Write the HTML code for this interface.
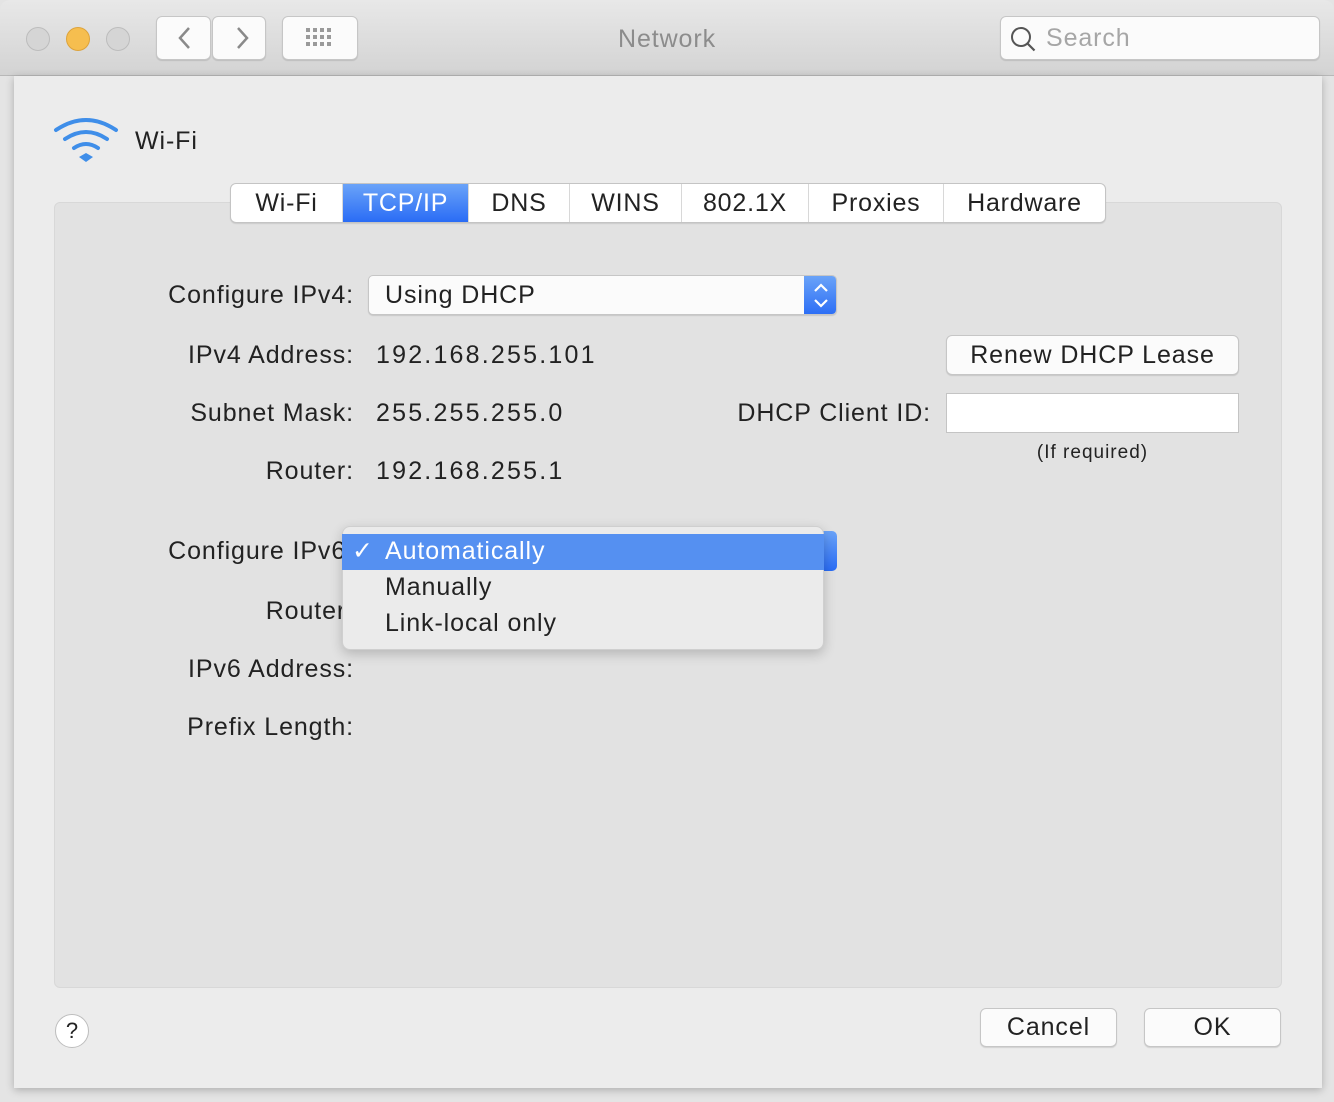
<!DOCTYPE html>
<html><head><meta charset="utf-8"><style>
*{box-sizing:border-box;margin:0;padding:0}
body{width:1334px;height:1102px;background:#e4e4e4;font-family:"Liberation Sans",sans-serif;color:#222;position:relative;overflow:hidden}
.a{position:absolute}
.title{left:0;top:0;width:1334px;height:76px;background:linear-gradient(#e8e8e8,#d3d3d3);border-bottom:1px solid #b8b8b8;border-radius:10px 10px 0 0}
.dot{width:24px;height:24px;border-radius:50%;top:27px;background:#d5d5d5;border:1px solid #bcbcbc}
.btn{background:#fbfbfb;border:1px solid #c6c6c6;border-radius:6px;box-shadow:0 1px 1px rgba(0,0,0,.12)}
.sheet{left:14px;top:76px;width:1308px;height:1012px;background:#ececec;box-shadow:0 2px 8px rgba(0,0,0,.25)}
.panel{left:54px;top:202px;width:1228px;height:786px;background:#e2e2e2;border:1px solid #d8d8d8;border-radius:6px}
.t{font-size:25px;white-space:nowrap;line-height:28px;letter-spacing:0.9px}
.n{letter-spacing:2.2px}
.r{text-align:right}
.tabs{left:230px;top:183px;height:40px;display:flex;background:#fff;border:1px solid #c4c4c4;border-radius:6px;overflow:hidden;box-shadow:0 1px 1px rgba(0,0,0,.1)}
.tabs div{height:38px;line-height:38px;font-size:25px;letter-spacing:0.8px;text-align:center;border-right:1px solid #d8d8d8}
.tabs div:last-child{border-right:none}
.tabs .on{background:linear-gradient(#6aa3f8,#2a6cf5);color:#fff}
</style></head><body>
<div class="a title"></div>
<div class="a dot" style="left:26px"></div>
<div class="a dot" style="left:66px;background:#f6be4f;border-color:#dda33b"></div>
<div class="a dot" style="left:106px"></div>
<div class="a btn" style="left:156px;top:16px;width:55px;height:44px"></div>
<div class="a btn" style="left:212px;top:16px;width:54px;height:44px"></div>
<svg class="a" style="left:156px;top:16px" width="110" height="44"><path d="M33 12l-9 10 9 10M82 12l9 10-9 10" fill="none" stroke="#8a8a8a" stroke-width="2.5"/></svg>
<div class="a btn" style="left:282px;top:16px;width:76px;height:44px"></div>
<svg class="a" style="left:282px;top:16px" width="76" height="44"><g fill="#9a9a9a"><rect x="24" y="12" width="4" height="4"/><rect x="31" y="12" width="4" height="4"/><rect x="38" y="12" width="4" height="4"/><rect x="45" y="12" width="4" height="4"/><rect x="24" y="19" width="4" height="4"/><rect x="31" y="19" width="4" height="4"/><rect x="38" y="19" width="4" height="4"/><rect x="45" y="19" width="4" height="4"/><rect x="24" y="26" width="4" height="4"/><rect x="31" y="26" width="4" height="4"/><rect x="38" y="26" width="4" height="4"/><rect x="45" y="26" width="4" height="4"/></g></svg>
<div class="a t" style="left:0;width:1334px;top:25px;text-align:center;color:#8c8c8c">Network</div>
<div class="a btn" style="left:1000px;top:16px;width:320px;height:44px"></div>
<svg class="a" style="left:1008px;top:24px" width="32" height="30"><circle cx="13" cy="13" r="9" fill="none" stroke="#555" stroke-width="2"/><path d="M19.5 19.5l7 7" stroke="#555" stroke-width="2.2"/></svg>
<div class="a t" style="left:1046px;top:24px;color:#a6a6a6">Search</div>
<div class="a sheet"></div>
<svg class="a" style="left:52px;top:114px" width="68" height="54"><g fill="none" stroke="#3f8ee9" stroke-width="4" stroke-linecap="round"><path d="M4 16Q34 -4 64 16"/><path d="M13 25Q34 11 55 25"/><path d="M22 34Q34 26 46 34"/></g><path d="M27 43l7-4 7 4-7 5z" fill="#3f8ee9"/></svg>
<div class="a t" style="left:135px;top:127px">Wi-Fi</div>
<div class="a panel"></div>
<div class="a tabs">
<div style="width:112px">Wi-Fi</div><div class="on" style="width:126px">TCP/IP</div><div style="width:101px">DNS</div><div style="width:112px">WINS</div><div style="width:127px">802.1X</div><div style="width:135px">Proxies</div><div style="width:161px">Hardware</div></div>
<div class="a t r" style="left:60px;width:294px;top:281px">Configure IPv4:</div>
<div class="a btn" style="left:368px;top:275px;width:469px;height:40px;border-radius:5px;overflow:hidden"><div class="a" style="right:0;top:0;width:32px;height:40px;background:linear-gradient(#6aa3f8,#2a6cf5)"></div></div>
<svg class="a" style="left:805px;top:275px" width="32" height="40"><path d="M10 16l6-6 6 6M10 25l6 6 6-6" fill="none" stroke="#fff" stroke-width="2.2"/></svg>
<div class="a t" style="left:385px;top:281px">Using DHCP</div>
<div class="a t r" style="left:60px;width:294px;top:341px">IPv4 Address:</div>
<div class="a t n" style="left:376px;top:341px">192.168.255.101</div>
<div class="a t r" style="left:60px;width:294px;top:399px">Subnet Mask:</div>
<div class="a t n" style="left:376px;top:399px">255.255.255.0</div>
<div class="a t r" style="left:60px;width:294px;top:457px">Router:</div>
<div class="a t n" style="left:376px;top:457px">192.168.255.1</div>
<div class="a btn" style="left:946px;top:335px;width:293px;height:40px"></div>
<div class="a t" style="left:946px;width:293px;top:341px;text-align:center">Renew DHCP Lease</div>
<div class="a t r" style="left:600px;width:331px;top:399px">DHCP Client ID:</div>
<div class="a" style="left:946px;top:393px;width:293px;height:40px;background:#fff;border:1px solid #c4c4c4"></div>
<div class="a" style="left:946px;width:293px;top:442px;text-align:center;font-size:19px;letter-spacing:1px">(If required)</div>
<div class="a t r" style="left:60px;width:294px;top:537px">Configure IPv6:</div>
<div class="a" style="left:800px;top:531px;width:37px;height:40px;border-radius:5px;background:linear-gradient(#6aa3f8,#2a6cf5)"></div>
<div class="a t r" style="left:60px;width:294px;top:597px">Router:</div>
<div class="a t r" style="left:60px;width:294px;top:655px">IPv6 Address:</div>
<div class="a t r" style="left:60px;width:294px;top:713px">Prefix Length:</div>
<div class="a" style="left:342px;top:526px;width:482px;height:124px;background:#ebebeb;border:1px solid #cfcfcf;border-radius:8px;box-shadow:0 4px 12px rgba(0,0,0,.2)"></div>
<div class="a" style="left:342px;top:534px;width:482px;height:36px;background:#5590f1"></div>
<div class="a t" style="left:352px;top:537px;color:#fff">✓</div>
<div class="a t" style="left:385px;top:537px;color:#fff">Automatically</div>
<div class="a t" style="left:385px;top:573px">Manually</div>
<div class="a t" style="left:385px;top:609px">Link-local only</div>
<div class="a" style="left:55px;top:1014px;width:34px;height:34px;border-radius:50%;background:#fff;border:1px solid #bdbdbd;text-align:center;line-height:32px;font-size:22px">?</div>
<div class="a btn" style="left:980px;top:1008px;width:137px;height:39px"></div>
<div class="a t" style="left:980px;width:137px;top:1013px;text-align:center">Cancel</div>
<div class="a btn" style="left:1144px;top:1008px;width:137px;height:39px"></div>
<div class="a t" style="left:1144px;width:137px;top:1013px;text-align:center">OK</div>
</body></html>
